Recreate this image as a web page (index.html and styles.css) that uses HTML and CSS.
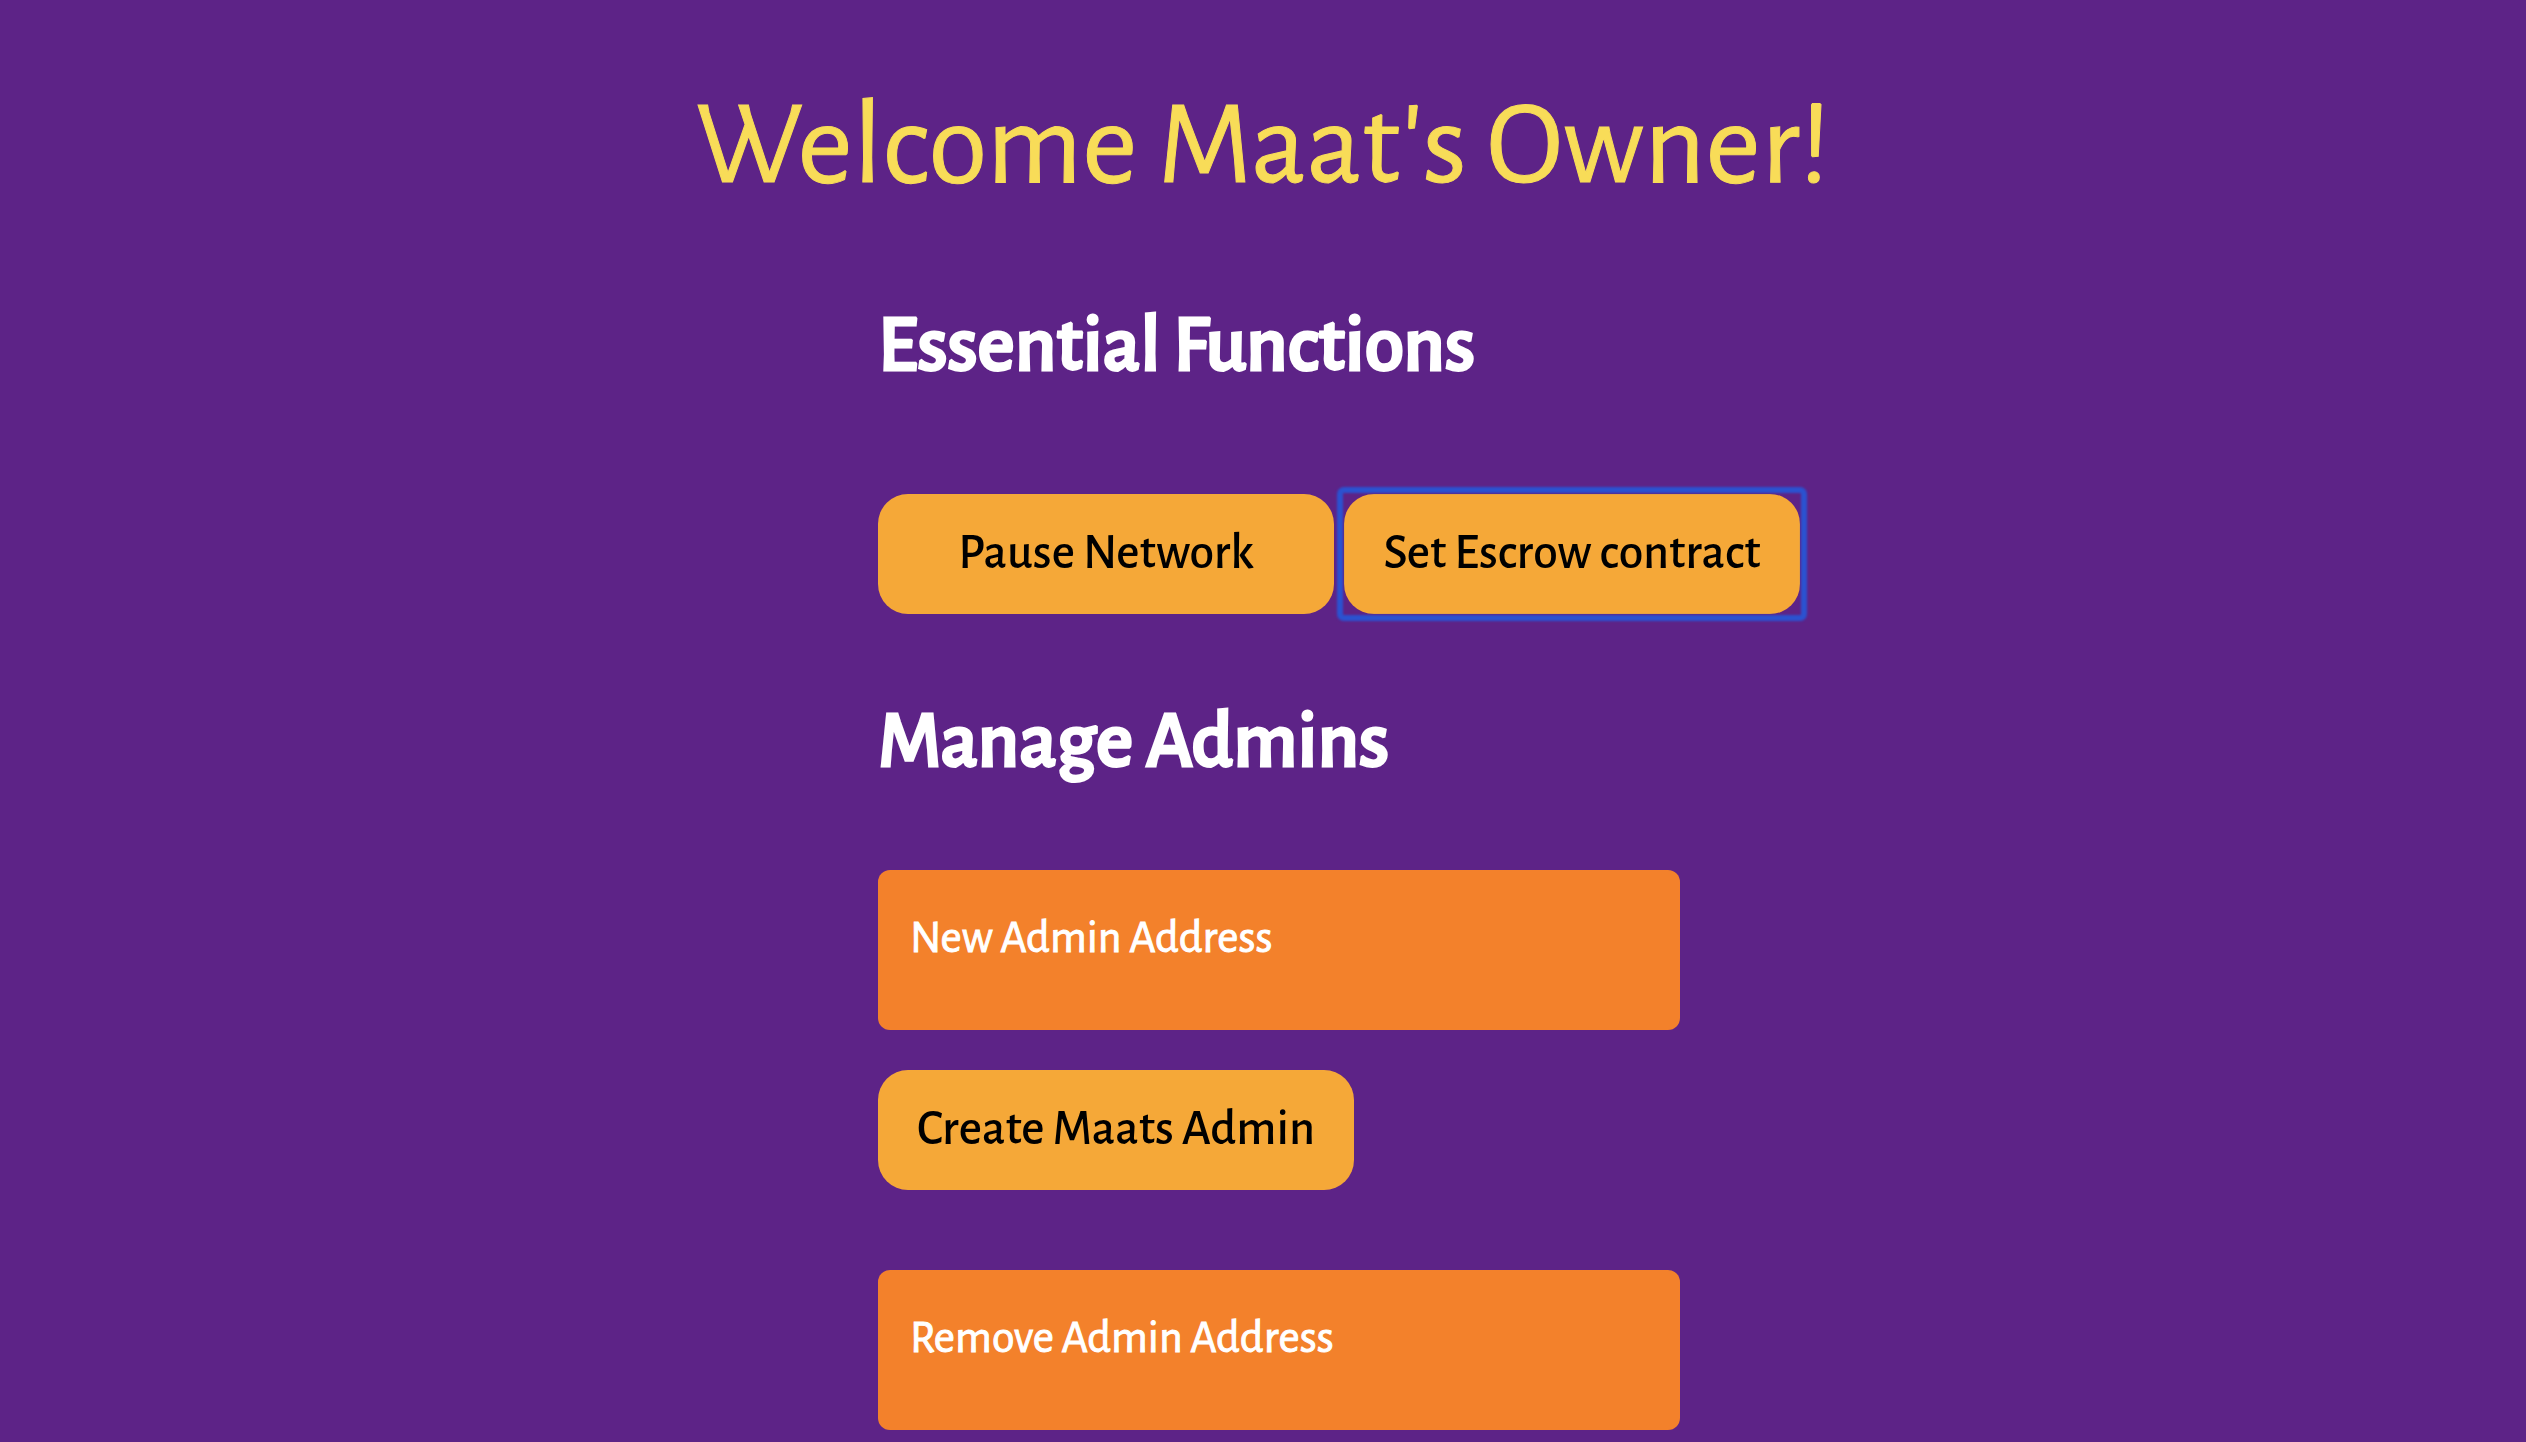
FILE: index.html
```html
<!DOCTYPE html>
<html lang="en">
<head>
<meta charset="utf-8">
<meta name="viewport" content="width=device-width, initial-scale=1">
<title>Maat Owner</title>
<link rel="stylesheet" href="styles.css">
</head>
<body>
<h1 class="title">Welcome Maat's Owner!</h1>
<main class="panel">
  <section class="section">
    <h2 class="heading">Essential Functions</h2>
    <div class="actions">
      <button class="button" type="button">Pause Network</button>
      <button class="button button-focused" type="button">Set Escrow contract</button>
    </div>
  </section>
  <section class="section">
    <h2 class="heading">Manage Admins</h2>
    <div class="forms">
      <form class="form">
        <textarea class="field" rows="1" aria-label="New Admin Address" placeholder="New Admin Address"></textarea>
        <button class="button" type="button">Create Maats Admin</button>
      </form>
      <form class="form">
        <textarea class="field" rows="1" aria-label="Remove Admin Address" placeholder="Remove Admin Address"></textarea>
      </form>
    </div>
  </section>
</main>
</body>
</html>
```
FILE: styles.css
```css
* {
  box-sizing: border-box;
}

body {
  margin: 0;
  background: #5d2387;
  color: #fff;
  font-family: "Alegreya Sans", Lato, sans-serif;
}

.title {
  margin: 0;
  padding-top: 82px;
  color: #f8dc58;
  font-size: 120px;
  font-weight: 400;
  line-height: 128px;
  text-align: center;
  -webkit-text-stroke: 1px currentColor;
}

.panel {
  display: flex;
  flex-direction: column;
  gap: 88px;
  margin-left: calc(50% - 385px);
  padding-top: 96px;
}

.section {
  display: flex;
  flex-direction: column;
  gap: 88px;
}

.heading {
  margin: 0;
  font-size: 80px;
  font-weight: 500;
  line-height: 80px;
  -webkit-text-stroke: 3px currentColor;
}

.actions {
  display: flex;
  gap: 10px;
  padding-top: 20px;
}

.button {
  position: relative;
  min-width: 456px;
  height: 120px;
  padding: 0 39px 2px;
  border: 0;
  border-radius: 30px;
  background: #f5a838;
  color: #000;
  font: inherit;
  font-size: 50px;
  font-weight: 500;
  white-space: nowrap;
}

/* Soft square focus ring around the rounded button */
.button-focused::after {
  content: "";
  position: absolute;
  inset: -7px;
  border: 6px solid #2b52d0;
  border-radius: 7px;
  filter: blur(1px);
}

.forms {
  display: flex;
  flex-direction: column;
  gap: 80px;
}

.form {
  display: flex;
  flex-direction: column;
  align-items: flex-start;
  gap: 40px;
}

.field {
  width: 802px;
  max-width: 100%;
  height: 160px;
  padding: 40px 32px;
  border: 0;
  border-radius: 12px;
  outline: 0;
  background: #f3812b;
  color: #fff;
  font: inherit;
  font-size: 46px;
  line-height: 56px;
  resize: none;
  -webkit-text-stroke: 1px currentColor;
}

.field::placeholder {
  color: #fff;
  opacity: 1;
}
```
